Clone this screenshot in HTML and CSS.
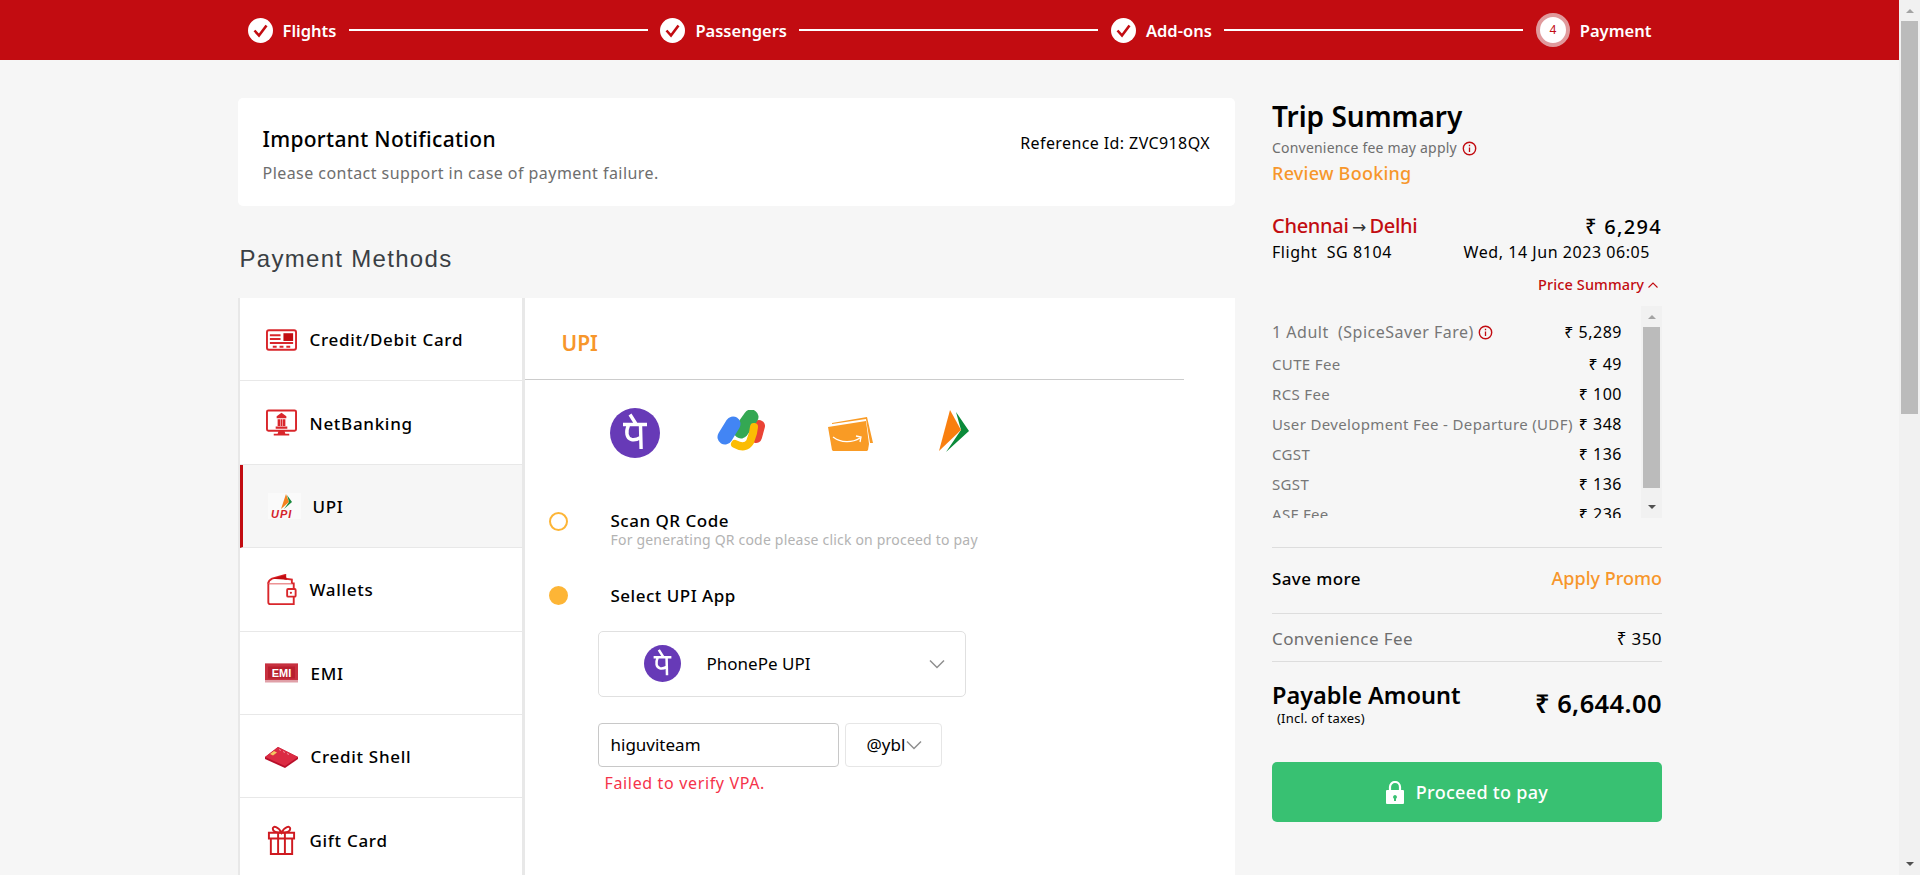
FILE: index.html
```html
<!DOCTYPE html>
<html lang="en">
<head>
    <meta charset="UTF-8">
    <title>Payment</title>
    <link rel="stylesheet" href="styles.css">
</head>
<body>
    <svg class="defs" width="0" height="0">
        <symbol id="phonepe" viewBox="0 0 50 50">
            <circle cx="25" cy="25" r="25" fill="#673ab7"/>
            <path d="M13 16.500h24M20 6.500l6 9.500M30.500 17l.6 24M18.500 17c-3 7-2 13 3 14.500 3 .8 6-.2 9-2" fill="none" stroke="#fff" stroke-width="3.400"/>
        </symbol>
        <symbol id="check" viewBox="0 0 25 25">
            <circle cx="12.500" cy="12.500" r="12.500" fill="#fff"/>
            <path d="M6.500 12.500l4.500 5 7.500-10" fill="none" stroke="#c20c11" stroke-width="2.600"/>
        </symbol>
        <symbol id="info" viewBox="0 0 15 15">
            <circle cx="7.500" cy="7.500" r="6.200" fill="none" stroke="#c20c11" stroke-width="1.400"/>
            <path d="M7.500 6.500v4.500M7.500 3.800v1.500" stroke="#c20c11" stroke-width="1.300"/>
        </symbol>
        <symbol id="chevron" viewBox="0 0 16 10">
            <path d="M1 1.500l7 7 7-7" fill="none" stroke="#8f8f8f" stroke-width="1.500"/>
        </symbol>
    </svg>

    <div class="viewport">
        <div class="page">
            <header class="topbar">
                <div class="stepper">
                    <div class="step"><svg class="step-check"><use href="#check"/></svg><span>Flights</span></div>
                    <div class="step-line"></div>
                    <div class="step"><svg class="step-check"><use href="#check"/></svg><span>Passengers</span></div>
                    <div class="step-line"></div>
                    <div class="step"><svg class="step-check"><use href="#check"/></svg><span>Add-ons</span></div>
                    <div class="step-line"></div>
                    <div class="step step-current"><div class="step-number">4</div><span>Payment</span></div>
                </div>
            </header>

            <div class="content">
                <main class="left-col">
                    <section class="notice">
                        <div>
                            <h2 class="notice-title">Important Notification</h2>
                            <p class="notice-text">Please contact support in case of payment failure.</p>
                        </div>
                        <div class="notice-ref">Reference Id: ZVC918QX</div>
                    </section>

                    <h1 class="methods-title">Payment Methods</h1>

                    <section class="methods">
                        <nav class="method-list">
                            <div class="method">
                                <svg class="method-icon" viewBox="0 0 32 24">
                                    <rect x="1" y="2" width="30" height="20" rx="2" fill="#fff" stroke="#d9262b" stroke-width="2"/>
                                    <path d="M4 6h11v2H4zM4 10h11v2H4zM4 14h24v2H4zM7 18h4v2H7zM14 18h4v2h-4zM21 18h4v2h-4z" fill="#d9262b"/>
                                    <rect x="18" y="5" width="10" height="8" fill="#c20c11"/>
                                </svg>
                                <span>Credit/Debit Card</span>
                            </div>
                            <div class="method">
                                <svg class="method-icon" viewBox="0 0 32 28">
                                    <rect x="1" y="1" width="30" height="21" rx="1.500" fill="#fff" stroke="#d9262b" stroke-width="2"/>
                                    <path d="M16 3.500l5 3.500v2H11V7zM12 10h2.500v7H12zM17.500 10H20v7h-2.500zM15 10h2v7h-2zM10 17.500h12V20H10z" fill="#d9262b"/>
                                    <path d="M13 22h6l1 3h4v2H8v-2h4z" fill="#d9262b"/>
                                </svg>
                                <span>NetBanking</span>
                            </div>
                            <div class="method method-active">
                                <svg class="method-icon method-icon-upi" viewBox="0 0 33 26">
                                    <rect width="33" height="26" fill="#fafafa"/>
                                    <path d="M13 16L18 1l3 8z" fill="#f58220"/>
                                    <path d="M16 16l5-7-2-7 5 7z" fill="#1b8a3f"/>
                                    <text x="3" y="25" class="upi-word">UPI</text>
                                </svg>
                                <span>UPI</span>
                            </div>
                            <div class="method">
                                <svg class="method-icon" viewBox="0 0 32 34">
                                    <path d="M2 10V30a2 2 0 0 0 2 2h25V10z" fill="#fff" stroke="#d9262b" stroke-width="2"/>
                                    <path d="M2 10c0-3 2-4 4-5l14-4v4l7 1v4" fill="#fff" stroke="#d9262b" stroke-width="2"/>
                                    <path d="M6 5l14-4 2 5z" fill="#c20c11"/>
                                    <rect x="22" y="16" width="9" height="8" rx="1" fill="#fff" stroke="#d9262b" stroke-width="2"/>
                                    <circle cx="26" cy="20" r="1.200" fill="#d9262b"/>
                                </svg>
                                <span>Wallets</span>
                            </div>
                            <div class="method">
                                <svg class="method-icon method-icon-wide" viewBox="0 0 33 19">
                                    <rect width="33" height="19" fill="#e0a0a8"/>
                                    <rect y="0" width="33" height="16.500" fill="#c7303f"/>
                                    <rect x="3" y="3" width="27" height="12" fill="#b81f2e"/>
                                    <text x="16.500" y="13" class="emi-word">EMI</text>
                                </svg>
                                <span>EMI</span>
                            </div>
                            <div class="method">
                                <svg class="method-icon method-icon-wide" viewBox="0 0 33 22">
                                    <path d="M0 11L13 1l20 10v2L20 22 0 13z" fill="#b80f2a"/>
                                    <path d="M0 11L13 1l20 10-13 9z" fill="#db2b43"/>
                                    <path d="M5 8l4-3 3 1.500-4 3z" fill="#f3c761"/>
                                    <path d="M14 3.500l2 1M18 5.500l2 1M22 7.500l2 1" stroke="#f3a7b1" stroke-width=".8"/>
                                </svg>
                                <span>Credit Shell</span>
                            </div>
                            <div class="method">
                                <svg class="method-icon" viewBox="0 0 32 33">
                                    <path d="M5 15h22v16H5zM3 9h26v6H3z" fill="#fff" stroke="#cf1a20" stroke-width="2"/>
                                    <path d="M12.500 9v22M19.500 9v22M16 9c-3-6-9-8-9-4 0 3 4 4 9 4 5 0 9-1 9-4 0-4-6-2-9 4z" fill="none" stroke="#cf1a20" stroke-width="2"/>
                                </svg>
                                <span>Gift Card</span>
                            </div>
                        </nav>

                        <div class="method-body">
                            <h3 class="method-title">UPI</h3>

                            <div class="app-logos">
                                <svg class="logo-phonepe"><use href="#phonepe"/></svg>
                                <svg class="logo-gpay" viewBox="0 0 48 42">
                                    <path d="M39 27l3-11" stroke="#ea4335" stroke-width="12" stroke-linecap="round"/>
                                    <path d="M24 21l10-14" stroke="#34a853" stroke-width="15" stroke-linecap="round"/>
                                    <path d="M8 27l8-13" stroke="#4285f4" stroke-width="15" stroke-linecap="round"/>
                                    <path d="M18 34c7 4 12 3 15-2l3-9 1-6" fill="none" stroke="#fbbc04" stroke-width="8" stroke-linecap="round"/>
                                </svg>
                                <svg class="logo-amazon" viewBox="0 0 46 35">
                                    <path d="M4 7l35-6 6 26h-3L38 3 4 8z" fill="#f99b25"/>
                                    <path d="M0 11l38-6 3 23-1 6-1 1H5l-1-1z" fill="#f99b25"/>
                                    <path d="M5 21c8 6 19 6 27 1M28 20l5 1-1 5" fill="none" stroke="#fff" stroke-width="1.300"/>
                                </svg>
                                <svg class="logo-bhim" viewBox="0 0 30 42">
                                    <path d="M7 42L22 20 17 2l13 19z" fill="#0b8a3a"/>
                                    <path d="M0 41L11 0l11 20z" fill="#f97f0f"/>
                                </svg>
                            </div>

                            <div class="upi-option option-qr">
                                <span class="radio"></span>
                                <div>
                                    <div class="option-label">Scan QR Code</div>
                                    <div class="option-hint">For generating QR code please click on proceed to pay</div>
                                </div>
                            </div>

                            <div class="upi-option option-app">
                                <span class="radio radio-on"></span>
                                <div class="option-label">Select UPI App</div>
                            </div>

                            <div class="app-select">
                                <svg class="select-logo"><use href="#phonepe"/></svg>
                                <span class="select-name">PhonePe UPI</span>
                                <svg class="chevron"><use href="#chevron"/></svg>
                            </div>

                            <div class="vpa-row">
                                <div class="vpa-input">higuviteam</div>
                                <div class="vpa-handle"><span>@ybl</span><svg class="chevron"><use href="#chevron"/></svg></div>
                            </div>
                            <div class="vpa-error">Failed to verify VPA.</div>
                        </div>
                    </section>
                </main>

                <aside class="summary">
                    <h2 class="summary-title">Trip Summary</h2>
                    <div class="summary-note">Convenience fee may apply <svg class="info"><use href="#info"/></svg></div>
                    <div class="review-link">Review Booking</div>

                    <div class="route-row">
                        <div class="route">Chennai<span class="route-arrow">→</span>Delhi</div>
                        <div class="route-price">₹ 6,294</div>
                    </div>
                    <div class="flight-row">
                        <div>Flight&nbsp; SG 8104</div>
                        <div>Wed, 14 Jun 2023 06:05</div>
                    </div>
                    <div class="price-toggle">Price Summary
                        <svg class="price-caret" viewBox="0 0 10 6"><path d="M.5 5.500L5 1l4.500 4.500" fill="none" stroke="#c20c11" stroke-width="1.100"/></svg>
                    </div>

                    <div class="price-box">
                        <div class="price-list">
                            <div class="price-row price-row-first"><span>1 Adult&nbsp; (SpiceSaver Fare) <svg class="info"><use href="#info"/></svg></span><b>₹ 5,289</b></div>
                            <div class="price-row"><span>CUTE Fee</span><b>₹ 49</b></div>
                            <div class="price-row"><span>RCS Fee</span><b>₹ 100</b></div>
                            <div class="price-row"><span>User Development Fee - Departure (UDF)</span><b>₹ 348</b></div>
                            <div class="price-row"><span>CGST</span><b>₹ 136</b></div>
                            <div class="price-row"><span>SGST</span><b>₹ 136</b></div>
                            <div class="price-row"><span>ASF Fee</span><b>₹ 236</b></div>
                        </div>
                        <div class="mini-scroll">
                            <span class="arrow-up"></span>
                            <span class="mini-thumb"></span>
                            <span class="arrow-down"></span>
                        </div>
                    </div>

                    <div class="save-row">
                        <span class="save-label">Save more</span>
                        <span class="promo-link">Apply Promo</span>
                    </div>
                    <div class="fee-row">
                        <span>Convenience Fee</span>
                        <b>₹ 350</b>
                    </div>
                    <div class="total-row">
                        <div>
                            <div class="total-label">Payable Amount</div>
                            <div class="total-note">(Incl. of taxes)</div>
                        </div>
                        <div class="total-value">₹ 6,644.00</div>
                    </div>
                    <button class="pay-btn">
                        <svg class="lock" viewBox="0 0 18 23">
                            <path d="M4 10V6a5 5 0 0 1 10 0v4" fill="none" stroke="#fff" stroke-width="2.200"/>
                            <path d="M1 9h16a1 1 0 0 1 1 1v12a1 1 0 0 1-1 1H1a1 1 0 0 1-1-1V10a1 1 0 0 1 1-1zm8 5a2 2 0 0 0-1 3.700V20h2v-2.300A2 2 0 0 0 9 14z" fill="#fff" fill-rule="evenodd"/>
                        </svg>
                        Proceed to pay
                    </button>
                </aside>
            </div>
        </div>

        <div class="page-scroll">
            <span class="arrow-up"></span>
            <span class="page-thumb"></span>
            <span class="arrow-down"></span>
        </div>
    </div>
</body>
</html>
```

FILE: styles.css
```css
* {
    box-sizing: border-box;
}
body {
    margin: 0;
    font-family: "Noto Sans", "Open Sans", sans-serif;
    background: #f6f6f6;
    color: #000;
}
h1, h2, h3, p {
    margin: 0;
    font-weight: 500;
}
.defs {
    position: absolute;
}
.viewport {
    display: flex;
    height: 100vh;
    overflow: hidden;
}
.page {
    flex: 1;
    min-width: 0;
}

/* top bar */
.topbar {
    height: 60px;
    background: #c20c11;
    padding-left: 247.500px;
}
.stepper {
    display: flex;
    align-items: center;
    height: 60px;
    color: #fff;
    font-size: 16.500px;
    font-weight: 600;
}
.step {
    display: flex;
    align-items: center;
    gap: 10px;
}
.step-check {
    width: 25px;
    height: 25px;
}
.step-line {
    width: 299px;
    height: 1.500px;
    background: #fff;
    margin: 0 12.500px;
}
.step-number {
    width: 34px;
    height: 34px;
    border-radius: 50%;
    background: #fff;
    border: 4.500px solid #e09a9c;
    color: #c20c11;
    font-size: 12px;
    font-weight: 400;
    text-align: center;
    line-height: 25px;
}

/* columns */
.content {
    display: flex;
    gap: 37px;
    padding: 38px 0 0 237.500px;
}
.left-col {
    width: 997.500px;
}
.summary {
    width: 390px;
}

/* notification */
.notice {
    display: flex;
    justify-content: space-between;
    height: 108px;
    padding: 28px 25px;
    background: #fff;
    border-radius: 5px;
}
.notice-title {
    font-size: 21px;
    line-height: 27px;
    letter-spacing: .3px;
}
.notice-text {
    margin-top: 9px;
    font-size: 16px;
    letter-spacing: .45px;
    color: #6e6e6e;
    font-weight: 400;
}
.notice-ref {
    font-size: 16px;
    letter-spacing: .4px;
    margin-top: 6px;
}
.methods-title {
    margin: 38px 0 24px 2px;
    font-family: "Liberation Sans", Arial, sans-serif;
    font-size: 24px;
    line-height: 30px;
    font-weight: 400;
    letter-spacing: 1.300px;
    color: #3a3f44;
}

/* payment panel */
.methods {
    display: flex;
    height: 640px;
    background: #fff;
    border-left: 2px solid #e8e8e8;
}
.method-list {
    width: 285px;
    flex-shrink: 0;
    border-right: 3px solid #e8e8e8;
}
.method {
    display: flex;
    align-items: center;
    gap: 13px;
    height: 83.400px;
    padding: 1px 0 0 26px;
    border-bottom: 1.500px solid #e8e8e8;
    font-size: 17px;
    letter-spacing: .7px;
    font-weight: 500;
}
.method-active {
    background: #f6f6f6;
    border-left: 3px solid #c20c11;
    padding-left: 25px;
    gap: 12px;
}
.method-icon {
    width: 31px;
    height: 32px;
    flex-shrink: 0;
}
.method-icon-upi {
    width: 33px;
    height: 26px;
}
.method-icon-wide {
    width: 33px;
    height: 22px;
    margin-left: -1px;
}
.upi-word {
    font-family: "Liberation Sans", sans-serif;
    font-size: 11px;
    font-weight: 700;
    font-style: italic;
    fill: #d4232b;
    letter-spacing: 1px;
}
.emi-word {
    font-family: "Liberation Sans", sans-serif;
    font-size: 11px;
    font-weight: 700;
    fill: #fff;
    text-anchor: middle;
    letter-spacing: 0;
}
.method-body {
    flex: 1;
}
.method-title {
    width: 659px;
    height: 82px;
    padding: 30px 0 0 37px;
    border-bottom: 1.500px solid #ccc;
    color: #f7962b;
    font-size: 21px;
    font-weight: 600;
    line-height: 30px;
}
.app-logos {
    position: relative;
    height: 102.400px;
}
.app-logos svg {
    position: absolute;
}
.logo-phonepe {
    left: 85px;
    top: 28.400px;
    width: 50px;
    height: 50px;
}
.logo-gpay {
    left: 192px;
    top: 30.400px;
    width: 48px;
    height: 42px;
}
.logo-amazon {
    left: 303px;
    top: 36.400px;
    width: 46px;
    height: 35px;
}
.logo-bhim {
    left: 414px;
    top: 30.400px;
    width: 30px;
    height: 42px;
}
.upi-option {
    display: flex;
    gap: 43px;
    padding-left: 24px;
}
.option-qr {
    margin-top: 27px;
}
.option-app {
    margin-top: 36.500px;
    align-items: center;
}
.radio {
    width: 19px;
    height: 19px;
    margin-top: 3px;
    border: 2px solid #fdb536;
    border-radius: 50%;
    flex-shrink: 0;
}
.option-app .radio {
    margin-top: 0;
}
.radio-on {
    background: #fdb536;
}
.option-label {
    font-size: 17px;
    letter-spacing: .5px;
    font-weight: 500;
    line-height: 24px;
}
.option-hint {
    font-size: 14px;
    letter-spacing: .2px;
    line-height: 14px;
    color: #b3b3b3;
}
.app-select {
    display: flex;
    align-items: center;
    width: 368px;
    height: 66px;
    margin: 23px 0 0 73px;
    padding-left: 45px;
    background: #fff;
    border: 1.500px solid #e0e0e0;
    border-radius: 5px;
    font-size: 17px;
}
.select-logo {
    width: 37px;
    height: 37px;
}
.select-name {
    flex: 1;
    margin-left: 26px;
}
.chevron {
    width: 16px;
    height: 10px;
}
.app-select .chevron {
    margin-right: 20px;
}
.vpa-row {
    display: flex;
    gap: 6px;
    margin: 26px 0 0 73px;
}
.vpa-input {
    width: 241px;
    height: 44px;
    padding-left: 12px;
    border: 1.500px solid #c8c8c8;
    border-radius: 4px;
    font-size: 17px;
    line-height: 41px;
}
.vpa-handle {
    display: flex;
    align-items: center;
    gap: 1px;
    width: 97px;
    height: 44px;
    padding-left: 21px;
    border: 1.500px solid #e6e6e6;
    border-radius: 4px;
    font-size: 17px;
}
.vpa-error {
    margin: 6px 0 0 80px;
    color: #f5334a;
    font-size: 16px;
    letter-spacing: .65px;
    line-height: 20px;
}

/* trip summary */
.summary-title {
    font-size: 28px;
    font-weight: 600;
    line-height: 36px;
}
.summary-note {
    display: flex;
    align-items: center;
    gap: 5px;
    margin-top: 4px;
    font-size: 14px;
    letter-spacing: .2px;
    line-height: 20px;
    color: #6e6e6e;
}
.info {
    width: 15px;
    height: 15px;
    vertical-align: -2px;
}
.review-link {
    margin-top: 2px;
    font-size: 18px;
    letter-spacing: .25px;
    line-height: 26px;
    color: #f7962b;
    font-weight: 500;
}
.route-row {
    display: flex;
    justify-content: space-between;
    align-items: center;
    margin-top: 26px;
    line-height: 28px;
}
.route {
    font-size: 20px;
    letter-spacing: -.3px;
    font-weight: 500;
    color: #c20c11;
}
.route-arrow {
    margin: 0 3.500px;
    color: #333;
    font-family: "DejaVu Sans", sans-serif;
    font-size: 17px;
}
.route-price {
    font-size: 20px;
    font-weight: 500;
    letter-spacing: 1.300px;
}
.flight-row {
    display: flex;
    justify-content: space-between;
    margin-top: -3.500px;
    padding-right: 12px;
    font-size: 16px;
    letter-spacing: .55px;
    line-height: 28px;
}
.price-toggle {
    margin-top: 8px;
    padding-right: 4px;
    text-align: right;
    color: #c20c11;
    font-size: 14.500px;
    letter-spacing: .1px;
    font-weight: 500;
    line-height: 20px;
}
.price-caret {
    width: 10px;
    height: 6px;
    vertical-align: 2px;
}
.price-box {
    display: flex;
    justify-content: space-between;
    height: 212px;
    margin-top: 12.500px;
    overflow: hidden;
}
.price-list {
    width: 350px;
    color: #777;
}
.price-row {
    display: flex;
    justify-content: space-between;
    align-items: center;
    height: 30px;
    font-size: 15px;
    letter-spacing: .35px;
}
.price-row b {
    color: #000;
    font-weight: 400;
    font-size: 16px;
    letter-spacing: .5px;
}
.price-row-first {
    margin-top: 11px;
    height: 32px;
    padding-bottom: 2px;
    font-size: 16px;
    letter-spacing: .5px;
}
.mini-scroll, .page-scroll {
    display: flex;
    flex-direction: column;
    align-items: center;
    flex-shrink: 0;
    width: 21px;
    background: #f1f1f1;
}
.mini-thumb {
    width: 17px;
    height: 161px;
    margin: 7.500px 0 auto;
    background: #bbb;
}
.page-thumb {
    width: 17px;
    height: 393px;
    margin: 8px 0 auto;
    background: #bbb;
}
.arrow-up, .arrow-down {
    width: 0;
    height: 0;
    border-left: 4.500px solid transparent;
    border-right: 4.500px solid transparent;
}
.arrow-up {
    margin-top: 9px;
    border-bottom: 4.500px solid #a3a3a3;
}
.arrow-down {
    margin-bottom: 9px;
    border-top: 4.500px solid #505050;
}
.save-row {
    display: flex;
    justify-content: space-between;
    align-items: center;
    height: 67px;
    margin-top: 29px;
    padding-bottom: 5px;
    border-top: 1.500px solid #ddd;
    border-bottom: 1.500px solid #ddd;
}
.save-label {
    font-size: 17px;
    letter-spacing: .4px;
    font-weight: 500;
}
.promo-link {
    font-size: 18px;
    font-weight: 500;
    color: #f7962b;
}
.fee-row {
    display: flex;
    justify-content: space-between;
    align-items: center;
    height: 48px;
    padding-top: 2px;
    border-bottom: 1.500px solid #ddd;
    font-size: 17px;
    letter-spacing: .4px;
    color: #6e6e6e;
}
.fee-row b {
    color: #000;
    font-weight: 400;
}
.total-row {
    display: flex;
    justify-content: space-between;
    align-items: flex-start;
    height: 100px;
    padding-top: 18px;
}
.total-label {
    font-size: 23.500px;
    font-weight: 600;
    line-height: 30px;
}
.total-note {
    padding-left: 5px;
    font-size: 13px;
    letter-spacing: .2px;
    line-height: 16px;
}
.total-value {
    margin-top: 8px;
    font-size: 25.500px;
    letter-spacing: .4px;
    font-weight: 600;
    line-height: 30px;
}
.pay-btn {
    display: flex;
    align-items: center;
    justify-content: center;
    gap: 12px;
    width: 390px;
    height: 60px;
    border: 0;
    border-radius: 5px;
    background: #38c172;
    color: #fff;
    font-family: inherit;
    font-size: 18px;
    letter-spacing: .3px;
    font-weight: 500;
}
.lock {
    width: 18px;
    height: 23px;
}
```
